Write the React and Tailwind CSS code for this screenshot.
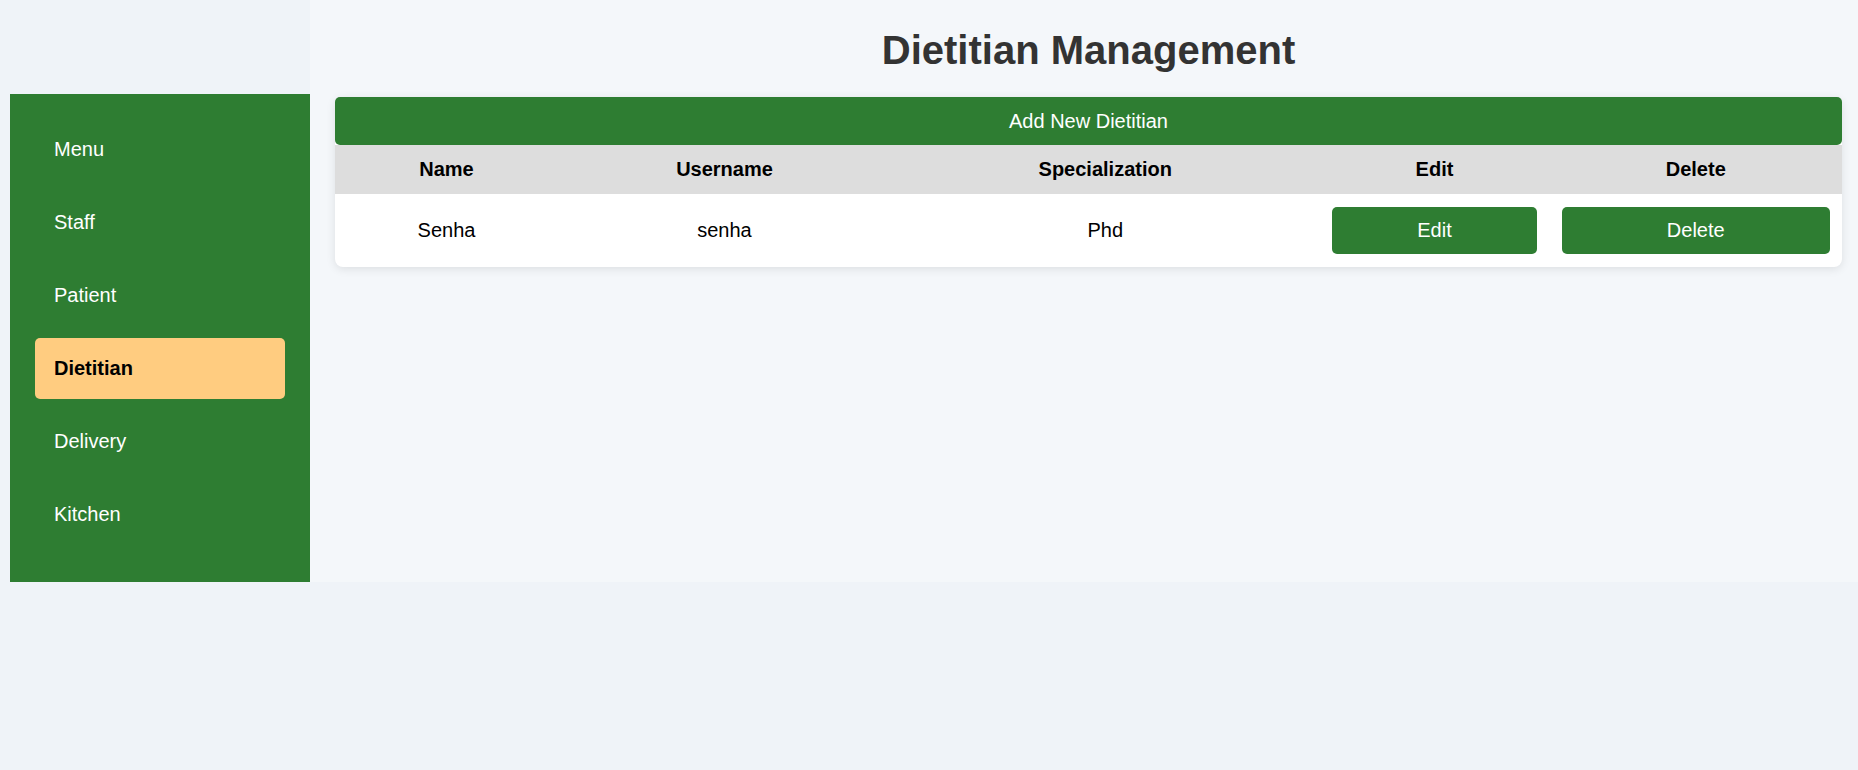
import React from "react";

const items = ["Menu", "Staff", "Patient", "Dietitian", "Delivery", "Kitchen"];

export default function App() {
  return (
    <div
      className="min-h-screen w-full bg-[#eff3f8]"
      style={{ fontFamily: '"Liberation Sans", Arial, sans-serif' }}
    >
      <div className="flex h-[582px]">
        <div className="w-[310px] shrink-0 pt-[94px] pl-[10px]">
          <nav className="flex h-[488px] w-[300px] flex-col gap-[12px] bg-[#2e7d32] px-[25px] pt-[25px] pb-[37px]">
            {items.map((it) => (
              <div
                key={it}
                className={
                  it === "Dietitian"
                    ? "rounded-[5px] bg-[#ffcc80] py-[19px] pl-[19px] text-[20px] font-bold leading-[23px] text-black"
                    : "rounded-[5px] py-[19px] pl-[19px] text-[20px] leading-[23px] text-white"
                }
              >
                {it}
              </div>
            ))}
          </nav>
        </div>
        <main className="flex-1 bg-[#f4f7fa] pl-[25px] pr-[16px]">
          <h1 className="pt-[27px] pb-[24px] text-center text-[40px] font-bold leading-[46px] text-[#333333]">
            Dietitian Management
          </h1>
          <div className="rounded-[8px] bg-white shadow-[0_2px_10px_rgba(0,0,0,0.1)]">
            <button className="block h-[48px] w-full rounded-[5px] bg-[#2e7d32] text-[20px] leading-[23px] text-white">
              Add New Dietitian
            </button>
            <div className="grid grid-cols-[223px_333px_428.5px_230px_292.5px] bg-[#dddddd] text-center text-[20px] font-bold leading-[23px] text-black">
              <div className="py-[13px]">Name</div>
              <div className="py-[13px]">Username</div>
              <div className="py-[13px]">Specialization</div>
              <div className="py-[13px]">Edit</div>
              <div className="py-[13px]">Delete</div>
            </div>
            <div className="grid grid-cols-[223px_333px_428.5px_230px_292.5px] items-center rounded-b-[8px] text-center text-[20px] leading-[23px] text-black">
              <div className="py-[13px]">Senha</div>
              <div className="py-[13px]">senha</div>
              <div className="py-[13px]">Phd</div>
              <div className="px-[12.5px] py-[13px]">
                <button className="block w-full rounded-[5px] bg-[#2e7d32] py-[12px] text-[20px] leading-[23px] text-white">
                  Edit
                </button>
              </div>
              <div className="px-[12.5px] py-[13px]">
                <button className="block w-full rounded-[5px] bg-[#2e7d32] py-[12px] text-[20px] leading-[23px] text-white">
                  Delete
                </button>
              </div>
            </div>
          </div>
        </main>
      </div>
    </div>
  );
}
